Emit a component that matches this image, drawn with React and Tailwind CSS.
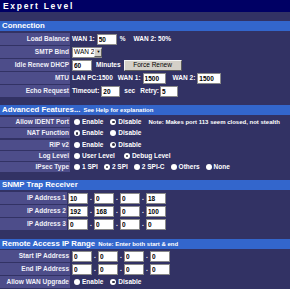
import React from 'react';

const Label = ({ children, w = 'w-[70px]', h = 'h-[12px]' }) => (
  <div className={`${w} ${h} shrink-0 bg-[#4d4d8a] flex items-center justify-end pr-[1px] text-[6.5px] font-bold text-[#f0f0f8] whitespace-nowrap`}>
    {children}
  </div>
);

const Box = ({ value, w = 'w-[20px]' }) => (
  <input
    readOnly
    value={value}
    className={`${w} h-[11px] shrink-0 border border-[#8a8a8a] bg-white px-[1px] text-[6.5px] leading-none text-black outline-none`}
  />
);

const Radio = ({ on, label }) => (
  <span className="flex items-center gap-[2px] whitespace-nowrap">
    <span className="w-[6px] h-[6px] rounded-full bg-white flex items-center justify-center shrink-0">
      {on && <span className="w-[2.5px] h-[2.5px] rounded-full bg-[#333344]" />}
    </span>
    <span>{label}</span>
  </span>
);

const Bar = ({ title, note }) => (
  <div className="h-[10px] bg-[#3366cc] flex items-center pl-[2px] gap-[3px] text-white font-bold whitespace-nowrap">
    <span className="text-[7.8px]">{title}</span>
    {note && <span className="text-[6px]">{note}</span>}
  </div>
);

const Value = ({ children, className = '' }) => (
  <div className={`flex items-center text-[6.5px] font-bold text-white whitespace-nowrap ${className}`}>{children}</div>
);

const IpRow = ({ label, parts, w, first }) => (
  <div className="flex h-[12px] mb-[1px]">
    <Label w={w}>{label}</Label>
    <Value className={first}>
      {parts.map((p, i) => (
        <React.Fragment key={i}>
          {i > 0 && <span className="w-[6px] text-center">.</span>}
          <Box value={p} />
        </React.Fragment>
      ))}
    </Value>
  </div>
);

export default function App() {
  return (
    <div className="w-[290px] h-[289px] overflow-hidden bg-[#323264] font-['Liberation_Sans',Arial,sans-serif] text-white">
      {/* title */}
      <div className="h-[12px] bg-[#000064] flex items-center pl-[3px]">
        <span className="text-[8.5px] font-bold tracking-[1.7px]">Expert Level</span>
      </div>
      <div className="h-[9px]" />

      <Bar title="Connection" />
      <div className="mt-[2px] flex flex-col gap-[1px]">
        <div className="flex h-[12px]">
          <Label>Load Balance</Label>
          <Value className="pl-[2px]">
            <span className="mr-[2px]">WAN 1:</span>
            <Box value="50" />
            <span className="ml-[3px]">%</span>
            <span className="ml-[8px]">WAN 2: 50%</span>
          </Value>
        </div>
        <div className="flex h-[12px]">
          <Label>SMTP Bind</Label>
          <Value className="pl-[2px]">
            <div className="w-[30px] h-[11px] shrink-0 border border-[#8a8a8a] bg-white flex items-center">
              <span className="flex-1 text-[6.5px] leading-none font-normal text-black pl-[1px] whitespace-nowrap">WAN 2</span>
              <span className="w-[8px] h-[9px] shrink-0 bg-[#d4d0c8] border border-[#f0f0f0] border-r-[#606060] border-b-[#606060] flex items-center justify-center text-black text-[4px] leading-none">▼</span>
            </div>
          </Value>
        </div>
        <div className="flex h-[12px]">
          <Label>Idle Renew DHCP</Label>
          <Value className="pl-[2px]">
            <Box value="60" />
            <span className="ml-[4px]">Minutes</span>
            <span className="ml-[3px] w-[58px] h-[11px] bg-[#d4d0c8] border border-[#f4f4f4] border-r-[#5a5a5a] border-b-[#5a5a5a] flex items-center justify-center text-black font-normal">
              Force Renew
            </span>
          </Value>
        </div>
        <div className="flex h-[12px]">
          <Label>MTU</Label>
          <Value className="pl-[2px]">
            <span>LAN PC:1500</span>
            <span className="ml-[5px] mr-[2px]">WAN 1:</span>
            <Box value="1500" w="w-[23px]" />
            <span className="ml-[7px] mr-[2px]">WAN 2:</span>
            <Box value="1500" w="w-[24px]" />
          </Value>
        </div>
        <div className="flex h-[12px]">
          <Label>Echo Request</Label>
          <Value className="pl-[2px]">
            <span className="mr-[2px]">Timeout:</span>
            <Box value="20" w="w-[19px]" />
            <span className="ml-[4px]">sec</span>
            <span className="ml-[5px] mr-[1px]">Retry:</span>
            <Box value="5" w="w-[18px]" />
          </Value>
        </div>
      </div>

      <div className="h-[8px]" />
      <Bar title="Advanced Features..." note="See Help for explanation" />
      <div className="mt-[2px] flex flex-col gap-[1.25px]">
        <div className="flex h-[10px]">
          <Label h="h-[10px]">Allow IDENT Port</Label>
          <Value className="pl-[4px] gap-[7px]">
            <Radio label="Enable" />
            <Radio on label="Disable" />
            <span className="text-[6px]">Note: Makes port 113 seem closed, not stealth</span>
          </Value>
        </div>
        <div className="flex h-[10px]">
          <Label h="h-[10px]">NAT Function</Label>
          <Value className="pl-[4px] gap-[7px]">
            <Radio on label="Enable" />
            <Radio label="Disable" />
          </Value>
        </div>
        <div className="flex h-[10px]">
          <Label h="h-[10px]">RIP v2</Label>
          <Value className="pl-[4px] gap-[7px]">
            <Radio label="Enable" />
            <Radio on label="Disable" />
          </Value>
        </div>
        <div className="flex h-[10px]">
          <Label h="h-[10px]">Log Level</Label>
          <Value className="pl-[4px] gap-[9px]">
            <Radio label="User Level" />
            <Radio on label="Debug Level" />
          </Value>
        </div>
        <div className="flex h-[10px]">
          <Label h="h-[10px]">IPsec Type</Label>
          <Value className="pl-[4px] gap-[6px]">
            <Radio label="1 SPI" />
            <Radio on label="2 SPI" />
            <Radio label="2 SPI-C" />
            <Radio label="Others" />
            <Radio label="None" />
          </Value>
        </div>
      </div>

      <div className="h-[8px]" />
      <Bar title="SNMP Trap Receiver" />
      <div className="mt-[2px]">
        <IpRow label="IP Address 1" parts={['10', '0', '0', '18']} w="w-[67px]" first="pl-[1px]" />
        <IpRow label="IP Address 2" parts={['192', '168', '0', '100']} w="w-[67px]" first="pl-[1px]" />
        <IpRow label="IP Address 3" parts={['0', '0', '0', '0']} w="w-[67px]" first="pl-[1px]" />
      </div>

      <div className="h-[8px]" />
      <Bar title="Remote Access IP Range" note="Note: Enter both start & end" />
      <div className="mt-[1px]">
        <IpRow label="Start IP Address" parts={['0', '0', '0', '0']} first="pl-[2px]" />
        <IpRow label="End IP Address" parts={['0', '0', '0', '0']} first="pl-[2px]" />
        <div className="flex h-[12px]">
          <Label>Allow WAN Upgrade</Label>
          <Value className="pl-[4px] gap-[7px]">
            <Radio label="Enable" />
            <Radio on label="Disable" />
          </Value>
        </div>
      </div>
    </div>
  );
}
